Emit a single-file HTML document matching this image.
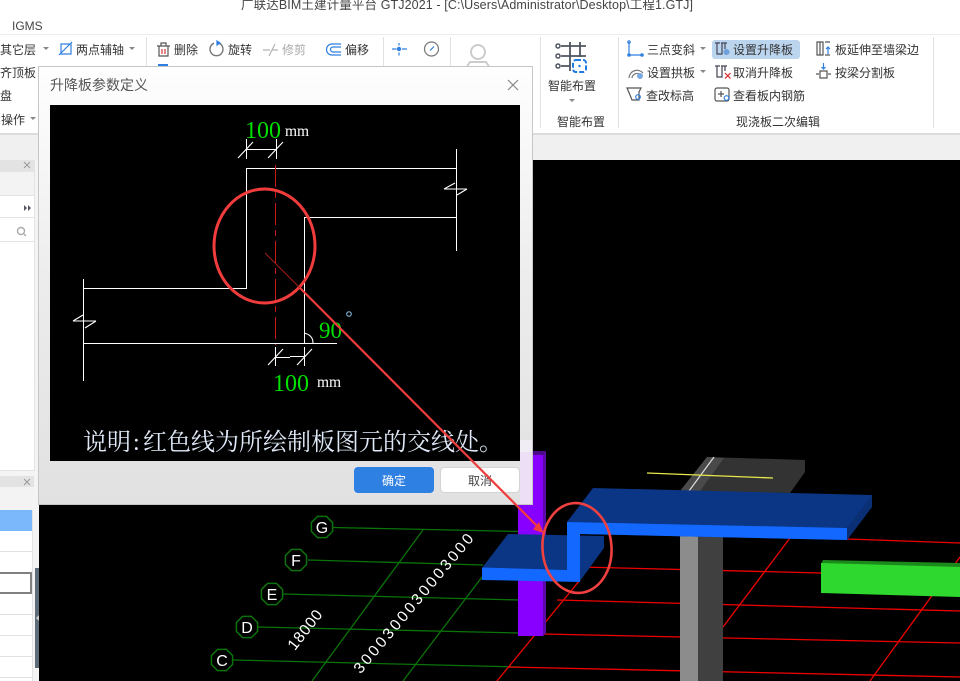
<!DOCTYPE html>
<html><head><meta charset="utf-8"><style>
html,body{margin:0;padding:0;background:#fff;width:960px;height:681px;overflow:hidden}
svg{display:block}
text{font-family:"Liberation Sans","Noto Sans CJK SC",sans-serif}
.r{font-size:12px;fill:#333}
.s{font-family:"Liberation Serif","Noto Serif CJK SC",serif}
</style></head><body>
<svg width="960" height="681" viewBox="0 0 960 681" xmlns="http://www.w3.org/2000/svg">
<defs><linearGradient id="dg" x1="0" y1="0" x2="0" y2="1"><stop offset="0" stop-color="#fefefe"/><stop offset=".12" stop-color="#fafafa"/><stop offset=".5" stop-color="#ececec"/><stop offset="1" stop-color="#e1e1e1"/></linearGradient></defs>
<rect width="960" height="681" fill="#fff"/>
<text x="241" y="9" font-size="12.5" fill="#444" textLength="452">广联达BIM土建计量平台 GTJ2021 - [C:\Users\Administrator\Desktop\工程1.GTJ]</text>
<text x="12" y="30" font-size="12" fill="#444">IGMS</text>
<rect y="34" width="960" height="1" fill="#eee"/>
<rect y="133" width="960" height="2" fill="#dcdcdc"/>
<rect y="135" width="960" height="25" fill="#f0f0f0"/>
<g fill="#e2e2e2"><rect x="146" y="37" width="1" height="91"/><rect x="383" y="37" width="1" height="30"/><rect x="450" y="37" width="1" height="30"/><rect x="540" y="37" width="1" height="91"/><rect x="618" y="37" width="1" height="91"/><rect x="933" y="37" width="1" height="91"/></g>

<rect x="712" y="40" width="88" height="19" rx="3" fill="#bcd5ef"/>
<g class="r" font-size="12">
<text class="r" x="0" y="54">其它层</text><text class="r" x="76" y="54">两点辅轴</text>
<text class="r" x="174" y="54">删除</text><text class="r" x="228" y="54">旋转</text>
<text class="r" x="282" y="54" style="fill:#aaa">修剪</text><text class="r" x="345" y="54">偏移</text>
<text class="r" x="0" y="77">齐顶板</text><text class="r" x="0" y="100">盘</text><text class="r" x="1" y="124">操作</text>
<text class="r" x="548" y="90">智能布置</text><text class="r" x="557" y="126">智能布置</text><text class="r" x="736" y="126">现浇板二次编辑</text>
<text class="r" x="647" y="54">三点变斜</text><text class="r" x="733" y="54">设置升降板</text><text class="r" x="835" y="54">板延伸至墙梁边</text>
<text class="r" x="647" y="77">设置拱板</text><text class="r" x="733" y="77">取消升降板</text><text class="r" x="835" y="77">按梁分割板</text>
<text class="r" x="646" y="100">查改标高</text><text class="r" x="733" y="100">查看板内钢筋</text>
</g>
<g fill="#888"><path d="M43 47h6l-3 3zM129 47h6l-3 3zM30 117h6l-3 3zM569 99h6l-3 3zM700 47h6l-3 3zM700 70h6l-3 3z"/></g>

<!-- ribbon icons -->
<g fill="none" stroke-width="1.2">
<path d="M59 55L72 42M61 44h10v10H61z" stroke="#2f7fe0"/>
<path d="M157 46h13M161 46v-3h5v3M159 46v10h9V46" stroke="#555"/><path d="M162 49v5M165 49v5" stroke="#d33"/>
<path d="M219 43.200a6.500 6.500 0 1 1 -5 0" stroke="#777" stroke-width="1.400"/><path d="M217 41l3 2-3 2z" fill="#2f7fe0" stroke="#2f7fe0"/>
<path d="M263 50h7M272 50h6M275 44l-6 12" stroke="#b4b4b4"/>
<path d="M341 44h-9a5.500 5.500 0 0 0 0 11h9M341 47h-8a2.500 2.500 0 0 0 0 5h8" stroke="#2f7fe0"/>
<path d="M392 49h4.500M402 49h5M399 43v2.500M399 52.500v3" stroke="#2f7fe0"/><circle cx="399" cy="49" r="1.600" fill="#2f7fe0" stroke="#2f7fe0"/>
<circle cx="431.500" cy="49" r="7" stroke="#777"/><path d="M430 50.500l4-4" stroke="#2f7fe0"/>
<circle cx="478" cy="52" r="7" stroke="#ccc" stroke-width="2"/><path d="M466 68l4-6h16l4 6" stroke="#ccc" stroke-width="2"/>
<path d="M629 42v13h14" stroke="#2f7fe0"/><circle cx="629" cy="42" r="1.200" stroke="#2f7fe0"/><circle cx="629" cy="55" r="1.200" stroke="#2f7fe0"/><circle cx="642" cy="55" r="1.200" stroke="#2f7fe0"/>
<path d="M629 78a8 8 0 0 1 14 -5M632 78a5 5 0 0 1 8 -3.500" stroke="#777"/><circle cx="640" cy="76" r="3" fill="#7aa9e0" stroke="none"/>
<path d="M627 88h14l-2 4v8h-7l-2-5z" stroke="#555"/><circle cx="638" cy="97" r="2.300" stroke="#2f7fe0"/>
<path d="M715 43h5M717 43v11h5V43M721 43h6" stroke="#445"/><path d="M725 43v6" stroke="#445"/><circle cx="726.500" cy="52" r="3" fill="#6f9fdc" stroke="none"/>
<path d="M715 66h5M717 66v11h5V66M721 66h6M725 66v5" stroke="#445"/><path d="M725 73l5.500 5.500M730.500 73l-5.500 5.500" stroke="#d22"/>
<rect x="715" y="88" width="14" height="13" rx="2" stroke="#555"/><path d="M721 91v6M718 94h6" stroke="#555"/><circle cx="726.500" cy="98" r="2.300" fill="#fff" stroke="#2f7fe0"/>
<path d="M817 42h6v13h-6zM820 42v13M825 42h5M825 55h5" stroke="#555"/><path d="M828 47v7M826 49l2-2 2 2" stroke="#2f7fe0"/>
<path d="M816 74h3M828 74h3M820 71h7v7h-7z" stroke="#555"/><path d="M823.500 63v6M821.500 67l2 2 2-2" stroke="#2f7fe0"/>
<path d="M561 46H586M561 56H586M561 66H570M570 42V71M580 42V57" stroke="#4f5560" stroke-width="1.800"/>
<g stroke="#4f5560" stroke-width="1.500" fill="#fff"><circle cx="558" cy="46" r="2"/><circle cx="558" cy="56" r="2"/><circle cx="558" cy="66" r="2"/></g>
<rect x="573" y="60" width="13" height="12" rx="3" stroke="#1e7be0" stroke-width="2" stroke-dasharray="5 2"/><circle cx="579.500" cy="66" r="1.200" fill="#1e7be0" stroke="none"/>
</g>

<!-- left panels -->
<rect x="0" y="160" width="39" height="521" fill="#f4f4f4"/>
<rect x="0" y="160" width="34" height="12" fill="#e3e3e3"/><rect x="0" y="172" width="34" height="23" fill="#f3f3f3"/>
<rect x="0" y="195" width="34" height="275" fill="#fff"/>
<path d="M0 195.500h34M0 217.500h34M0 241.500h34M0 470.500h34" stroke="#e4e4e4"/>
<path d="M34.500 160v311" stroke="#e4e4e4"/>
<path d="M24 205l3 3-3 3zM28 205l3 3-3 3z" fill="#556"/>
<circle cx="21" cy="231" r="3.500" fill="none" stroke="#aaa" stroke-width="1.400"/><path d="M24 234l2 2" stroke="#aaa" stroke-width="1.400"/>
<path d="M24 162l6 6M30 162l-6 6" stroke="#999"/>
<rect x="0" y="476" width="34" height="11" fill="#e3e3e3"/><path d="M24 479l6 6M30 479l-6 6" stroke="#999"/>
<rect x="0" y="487" width="34" height="23" fill="#f3f3f3"/>
<rect x="0" y="510" width="32" height="171" fill="#fff"/><rect x="0" y="510" width="32" height="21" fill="#7ab8fb"/>
<path d="M0 551.500h32M0 614.500h32M0 635.500h32M0 656.500h32M0 677.500h32M32.500 510v171" stroke="#e2e2e2"/>
<rect x="0" y="574" width="30" height="18" fill="#fff"/><path d="M0 573h31v20H0" fill="none" stroke="#808080" stroke-width="2"/>
<rect x="35" y="568" width="4" height="100" fill="#5f6b78"/>
<path d="M39 615l-3 3 3 3z" fill="#ccc"/>

<!-- viewport -->
<rect x="39" y="160" width="921" height="521" fill="#000"/>
<g stroke="#0a730a" stroke-width="1.300" fill="none">
<path d="M333 527.500L545 532M308 560L483 565M283 594L520 600M258 627L520 633M233 660L520 667M423 530L312 681M482 577L403 681"/>
</g>
<g fill="#000" stroke="#0a730a" stroke-width="1.500">
<polygon transform="translate(322 527)" points="10.600,4.400 4.400,10.600 -4.400,10.600 -10.600,4.400 -10.600,-4.400 -4.400,-10.600 4.400,-10.600 10.600,-4.400"/>
<polygon transform="translate(296 560)" points="10.600,4.400 4.400,10.600 -4.400,10.600 -10.600,4.400 -10.600,-4.400 -4.400,-10.600 4.400,-10.600 10.600,-4.400"/>
<polygon transform="translate(272 594)" points="10.600,4.400 4.400,10.600 -4.400,10.600 -10.600,4.400 -10.600,-4.400 -4.400,-10.600 4.400,-10.600 10.600,-4.400"/>
<polygon transform="translate(247 627)" points="10.600,4.400 4.400,10.600 -4.400,10.600 -10.600,4.400 -10.600,-4.400 -4.400,-10.600 4.400,-10.600 10.600,-4.400"/>
<polygon transform="translate(222 660)" points="10.600,4.400 4.400,10.600 -4.400,10.600 -10.600,4.400 -10.600,-4.400 -4.400,-10.600 4.400,-10.600 10.600,-4.400"/>
</g>
<g fill="#fff" font-size="16" text-anchor="middle"><text x="322" y="533">G</text><text x="296" y="566">F</text><text x="272" y="600">E</text><text x="247" y="633">D</text><text x="222" y="666">C</text></g>
<text transform="translate(309 633) rotate(-52)" fill="#fff" font-size="15.500" text-anchor="middle" x="0" y="0" textLength="46">18000</text>
<text transform="translate(476 537) rotate(-50)" fill="#fff" font-size="15.500" text-anchor="end" x="0" y="0" letter-spacing="2.600">3000300030003000</text>

<g stroke="#f00000" stroke-width="1.300" fill="none">
<path d="M847 539L960 543M580 567L821 573M557 600L960 611M543 634L960 643M508 667L960 677M790 538L723 627M960 557L870 681M580 580L497 681M690 672L682 681"/>
</g>
<path d="M518 455h25v181h-25z" fill="#8800ff"/><path d="M518 455l4-4h24v4l-3 0z" fill="#4a0a8a"/><path d="M543 455l3-3v181l-3 3z" fill="#5a0aa8"/>
<path d="M680 536h18v145h-18z" fill="#8c8c8c"/><path d="M698 536h25v145h-25z" fill="#404040"/>
<path d="M707 457L805 460V472L790 493L680 491z" fill="#333"/><path d="M707 457L724 458L700 491L680 491z" fill="#4a4a4a"/>
<path d="M714 457L689 491" stroke="#ddd" stroke-width="1.200"/><path d="M647 473L773 478" stroke="#e8e84a" stroke-width="1.300"/>
<path d="M823 560L960 563V568L821 564z" fill="#1b8a1b"/><path d="M821 563L960 567V597L821 593z" fill="#2ed82e"/>
<path d="M508 534L604 536V548L580 581L567 570L482 568z" fill="#0b3585"/>
<path d="M593 488L872 495V507L847 540L580 534L567 522z" fill="#0b3585"/>
<path d="M872 495V507L847 540V528z" fill="#0a2f75"/>
<path d="M567 522L847 528V540L580 534V582L482 580V567.500L567 570z" fill="#1268ff"/>

<!-- dialog -->
<rect x="38.500" y="66.500" width="494" height="438" fill="url(#dg)" stroke="#c6c6c6"/>
<rect x="520" y="452" width="12" height="52" fill="#ecdff6"/>
<rect x="520" y="440" width="12" height="12" fill="#f1edf4"/>
<text x="50" y="90" font-size="14" fill="#555">升降板参数定义</text>
<path d="M508 80l10 10M518 80l-10 10" stroke="#888" stroke-width="1.200"/>
<rect x="50" y="105" width="470" height="356" fill="#000"/>
<g stroke="#fff" stroke-width="1" fill="none" shape-rendering="crispEdges">
<path d="M456.500 168.500H246.500V288.500H83.500M83.500 279V381M83.500 343.500H337M304.500 343.500V217.500H456.500M456.500 149V251"/>
<path d="M246.500 139V159M276.500 139V159M246.500 149.500H276.500"/>
<path d="M275.500 347V366M304.500 347V366M275.500 357.500H290M290 356.500H304.500"/>
</g>
<g stroke="#fff" stroke-width="1.100" fill="none">
<path d="M238 158L253 142M268 158L283 142M268 365L283 349M297 365L312 349"/>
<path d="M304 333Q313 335 313 343"/>
<path d="M444 189H467M444 189L455 183M467 189L457 195M73 321H96M73 321L83 315M96 321L85 328"/>
</g>
<path d="M275.500 165V345" stroke="#c81818" stroke-width="1" stroke-dasharray="22 5 6 5"/>
<g class="s">
<text class="s" x="245" y="138" font-size="24" fill="#00e000">100</text><text class="s" x="285" y="136" font-size="15.500" fill="#fff">mm</text>
<text class="s" x="273" y="391" font-size="24" fill="#00e000">100</text><text class="s" x="317" y="387" font-size="15.500" fill="#fff">mm</text>
<text class="s" x="319" y="338" font-size="23" fill="#00e000">90</text>
</g>
<circle cx="349" cy="314" r="2.300" fill="none" stroke="#8cc4e8"/>
<text class="s" y="450" font-size="24" fill="#dfe9f8"><tspan x="83">说明</tspan><tspan x="133">:</tspan><tspan x="143">红色线为所绘制板图元的交线处。</tspan></text>
<rect x="354" y="467" width="80" height="26" rx="4" fill="#2f80e3"/>
<text x="394" y="485" font-size="12" fill="#fff" text-anchor="middle">确定</text>
<rect x="440.500" y="467.500" width="79" height="25" rx="4" fill="#fff" stroke="#d4d4d4"/>
<text x="480" y="485" font-size="12" fill="#444" text-anchor="middle">取消</text>
<rect x="158" y="64" width="10" height="2" fill="#2f7fe0"/>

<!-- annotations -->
<ellipse cx="264.500" cy="246" rx="50.500" ry="57" fill="none" stroke="#f03c3c" stroke-width="3"/>
<ellipse cx="577" cy="548" rx="34.500" ry="45" fill="none" stroke="#f04040" stroke-width="2.600" transform="rotate(-4 577 548)"/>
<path d="M265 253L300 288" stroke="#a02020" stroke-width="1"/>
<path d="M300 288L540 529" stroke="#f03c3c" stroke-width="2.200"/>
<path d="M543.500 533L533 529.500L539 522z" fill="#f03c3c"/>
</svg>
</body></html>
